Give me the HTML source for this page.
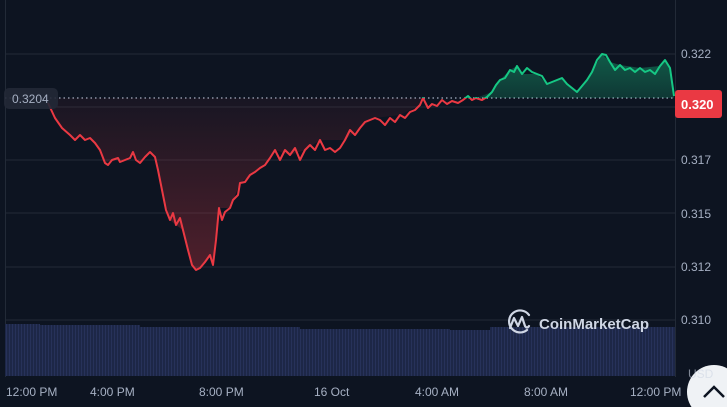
<!DOCTYPE html><html><head><style>
body{margin:0;width:727px;height:407px;background:#0d1421;overflow:hidden;font-family:"Liberation Sans",sans-serif;position:relative}
.t{position:absolute;color:#a6b0c3;font-size:12px}
</style></head><body>
<svg width="727" height="407" style="position:absolute;left:0;top:0">
<defs>
<linearGradient id="rg" x1="0" y1="98" x2="0" y2="270" gradientUnits="userSpaceOnUse"><stop offset="0" stop-color="#ea3943" stop-opacity="0.05"/><stop offset="1" stop-color="#ea3943" stop-opacity="0.3"/></linearGradient>
<linearGradient id="gg" x1="0" y1="54" x2="0" y2="98" gradientUnits="userSpaceOnUse"><stop offset="0" stop-color="#16c784" stop-opacity="0.4"/><stop offset="1" stop-color="#16c784" stop-opacity="0.2"/></linearGradient>
<pattern id="vb" width="3" height="60" patternUnits="userSpaceOnUse"><rect width="3" height="60" fill="#1d2747"/><rect width="1" height="60" fill="#27325a"/></pattern>
<clipPath id="below"><rect x="0" y="98" width="676" height="300"/></clipPath>
<clipPath id="above"><rect x="0" y="0" width="676" height="98"/></clipPath>
</defs>
<g stroke="#222a37" stroke-width="1">
<line x1="5" y1="54" x2="675" y2="54"/><line x1="5" y1="107" x2="675" y2="107"/><line x1="5" y1="160" x2="675" y2="160"/><line x1="5" y1="213" x2="675" y2="213"/><line x1="5" y1="267" x2="675" y2="267"/><line x1="5" y1="320" x2="675" y2="320"/>
<line x1="675.5" y1="0" x2="675.5" y2="377"/><line x1="5.5" y1="0" x2="5.5" y2="377"/>
</g>
<path d="M5 324H40V325H140V327H300V329H450V330H490V327H675V376H5Z" fill="url(#vb)"/>
<line x1="5" y1="98" x2="675" y2="98" stroke="#a6b0c3" stroke-width="1.2" stroke-dasharray="1.5 3"/>
<path id="p" fill="none" d="M48 103L55 118L62 128L70 135L75 140L80 135L85 140L90 138L95 143L100 150L105 163L108 165L112 160L118 158L120 162L125 160L130 158L133 152L136 160L140 163L145 157L150 152L155 157L158 170L162 190L166 210L170 220L173 213L176 225L180 218L183 230L188 250L192 265L196 270L200 268L205 262L210 255L213 265L216 240L219 208L222 220L225 212L230 208L233 200L238 195L240 183L245 182L250 175L255 172L260 168L265 165L270 158L275 150L280 160L285 150L290 155L295 148L300 160L305 150L310 145L315 150L320 140L325 150L330 148L335 152L340 148L345 140L350 130L355 135L360 128L365 122L370 120L375 118L380 120L385 125L390 118L395 122L400 115L405 118L410 112L415 110L420 105L423 98L428 108L432 104L437 106L442 100L447 104L452 101L458 103L463 100L468 96L472 100L476 98L482 100L487 97L492 92L496 85L500 80L505 78L510 70L514 72L517 66L522 74L527 68L532 72L537 74L542 76L547 84L552 82L557 80L562 78L567 84L572 88L577 92L582 86L587 80L592 72L597 60L602 54L606 55L610 62L615 70L620 65L625 70L630 68L635 72L640 68L645 72L650 70L655 74L660 66L665 60L670 68L674 96"/>
<path clip-path="url(#below)" d="M48 98L48 103L55 118L62 128L70 135L75 140L80 135L85 140L90 138L95 143L100 150L105 163L112 160L125 160L133 152L140 163L150 152L155 157L162 190L170 220L176 225L183 230L192 265L196 270L205 262L210 255L213 265L216 240L219 208L230 208L240 183L255 172L270 158L275 150L290 155L305 150L320 140L345 140L360 128L375 118L400 115L420 105L423 98Z" fill="url(#rg)"/>
<path clip-path="url(#above)" d="M476 98L492 92L500 80L510 70L517 66L522 74L537 74L547 84L562 78L577 92L592 72L602 54L610 62L620 65L640 68L660 66L665 60L670 68L674 96L674 98Z" fill="url(#gg)"/>
<use href="#p" clip-path="url(#below)" stroke="#ea3943" stroke-width="2" stroke-linejoin="round"/>
<use href="#p" clip-path="url(#above)" stroke="#16c784" stroke-width="2" stroke-linejoin="round"/>
<rect x="4" y="88" width="54" height="21" rx="5" fill="#222836" opacity="0.9"/>
<text x="12" y="103" fill="#a6b0c3" font-size="12" font-family="Liberation Sans">0.3204</text>
<rect x="675" y="90" width="47" height="28" rx="3" fill="#ea3943"/>
<text x="681" y="109" fill="#fff" font-size="13" font-weight="bold" font-family="Liberation Sans">0.320</text>
<circle cx="714" cy="392" r="27" fill="#eff2f5"/>
<path d="M704 397L714 387L724 397" fill="none" stroke="#0d1421" stroke-width="2.5"/>
<g fill="none" stroke="#cfd6e4" stroke-width="2.2" stroke-linecap="round" stroke-linejoin="round"><path d="M527 330A11 11 0 1 1 529 315"/><path d="M510 328L514 318L518 326L522 317L525 326Q527 329 529 326"/></g>
<text x="539" y="329" fill="#cfd6e4" font-size="15" font-weight="bold" font-family="Liberation Sans">CoinMarketCap</text>
</svg>
<div class="t" style="left:681px;top:47px">0.322</div>
<div class="t" style="left:681px;top:153px">0.317</div>
<div class="t" style="left:681px;top:207px">0.315</div>
<div class="t" style="left:681px;top:260px">0.312</div>
<div class="t" style="left:681px;top:313px">0.310</div>
<div class="t" style="left:688px;top:367px;color:#cfd6e4;opacity:.6">USD</div>
<div class="t" style="left:6px;top:385px">12:00 PM</div>
<div class="t" style="left:90px;top:385px">4:00 PM</div>
<div class="t" style="left:199px;top:385px">8:00 PM</div>
<div class="t" style="left:314px;top:385px">16 Oct</div>
<div class="t" style="left:415px;top:385px">4:00 AM</div>
<div class="t" style="left:524px;top:385px">8:00 AM</div>
<div class="t" style="left:630px;top:385px">12:00 PM</div>
</body></html>
